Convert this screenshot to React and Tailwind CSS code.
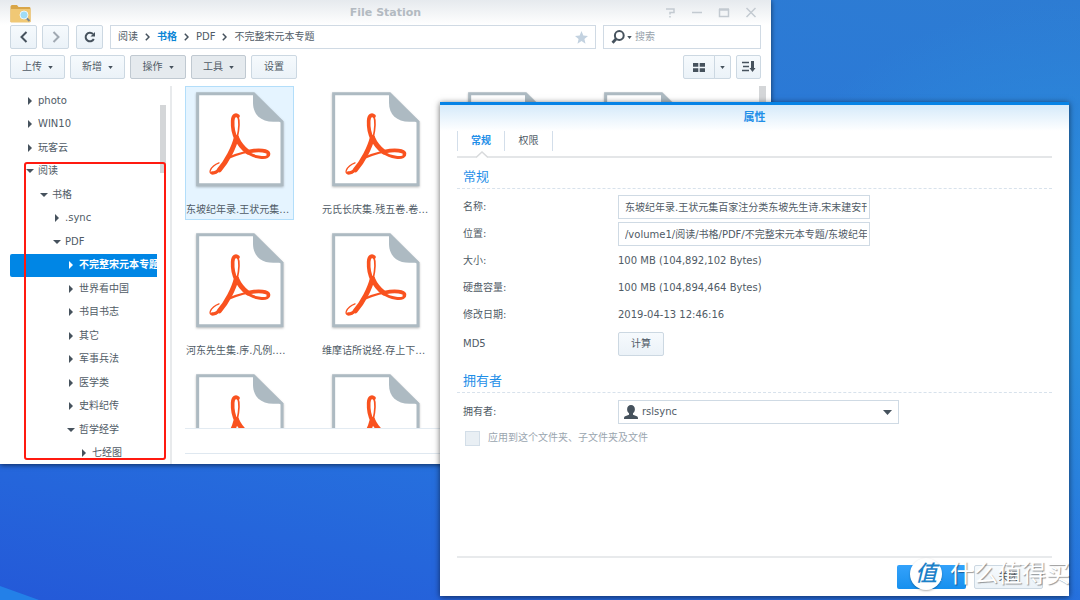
import React, { useState } from 'react';

const TREE = [
  { name: 'photo', level: 0 },
  { name: 'WIN10', level: 0 },
  { name: '玩客云', level: 0 },
  { name: '阅读', level: 0, open: true },
  { name: '书格', level: 1, open: true },
  { name: '.sync', level: 2 },
  { name: 'PDF', level: 2, open: true },
  { name: '不完整宋元本专题', level: 3 },
  { name: '世界看中国', level: 3 },
  { name: '书目书志', level: 3 },
  { name: '其它', level: 3 },
  { name: '军事兵法', level: 3 },
  { name: '医学类', level: 3 },
  { name: '史料纪传', level: 3 },
  { name: '哲学经学', level: 3, open: true },
  { name: '七经图', level: 4 },
];

const INDENT = ['pl-4', 'pl-[30px]', 'pl-[43px]', 'pl-[57px]', 'pl-[70px]'];

const FILES = [
  '东坡纪年录.王状元集百家注分类',
  '元氏长庆集.残五卷.卷一至五',
  '温国文正公文集',
  '白氏文集',
  '河东先生集.序.凡例.目录卷',
  '维摩诘所说经.存上下卷全本',
  '文选',
  '史记',
  '河东集',
  '昌黎集',
  '汉书',
  '后汉书',
];

const BTN =
  'flex h-6 items-center justify-center rounded-[2px] border border-[#ccd8e2] bg-linear-to-b from-[#f6fafd] to-[#ebf2f8]';

const Caret = ({ className = '' }) => (
  <svg viewBox="0 0 6 4" className={`h-[3px] w-[5px] shrink-0 fill-[#46525d] ${className}`}>
    <path d="M0 0h6L3 4z" />
  </svg>
);

const TreeArrow = ({ open, selected }) => (
  <svg viewBox="0 0 8 8" className={`size-2 shrink-0 ${selected ? 'fill-white' : 'fill-[#46525d]'}`}>
    {open ? <path d="M0 2h8L4 6z" /> : <path d="M2 0l4 4-4 4z" />}
  </svg>
);

const PdfIcon = () => (
  <svg viewBox="78 38 264 284" className="h-[95px] w-[88px] drop-shadow-[0_1px_1px_rgba(0,0,0,0.25)]">
    <path d="M83 43H251L336 127V316H83z" fill="#fff" stroke="#adbac2" strokeWidth="9" />
    <path d="M249 40l92 87h-31c-38 0-61-22-61-57z" fill="#adbac2" />
    <g fill="none" stroke="#f9521f" strokeLinecap="round">
      <path d="M204 110c-6-6-15-3-16 14-1 22 3 40 11 54" strokeWidth="11" />
      <path d="M203 109c6 14 4 42-2 68" strokeWidth="5" />
      <path d="M199 174c-7 30-29 72-51 97" strokeWidth="15" />
      <path d="M150 270c-15 16-34 17-29 2 4-9 13-17 26-22" strokeWidth="4" />
      <path d="M127 280c7 2 14-3 22-11" strokeWidth="10" />
      <path d="M200 175c7 17 19 31 34 43" strokeWidth="15" />
      <path d="M232 218c20 17 60 21 64 8" strokeWidth="9" />
      <path d="M178 234c25-11 50-19 80-20" strokeWidth="7" />
      <path d="M236 216c28-6 63-4 59 8" strokeWidth="11" />
    </g>
  </svg>
);

const UserIcon = () => (
  <svg viewBox="0 0 14 14" className="size-3.5 shrink-0 fill-[#46525d]">
    <path d="M7 0c2.400 0 3.900 1.700 3.900 4.200 0 1.800-.8 3.200-1.900 4.100v1.500l3.800 1.500c.8.300 1.200 1 1.200 2.700H0c0-1.700.4-2.400 1.200-2.700L5 9.800V8.300C3.900 7.400 3.100 6 3.100 4.200 3.100 1.700 4.600 0 7 0z" />
  </svg>
);

const FolderIcon = () => (
  <svg viewBox="0 0 20 18" className="h-[18px] w-[21px]">
    <path d="M0 2c0-1 .5-2 1.500-2h5L8 2h10.500c1 0 1.500.5 1.500 1.500V17H0z" fill="#d9a648" />
    <path d="M0 4h20v12.500c0 .5-.5 1-1 1H1c-.6 0-1-.5-1-1z" fill="#f0c875" />
    <path d="M16 13l3 3" stroke="#7b8790" strokeWidth="2" />
    <circle cx="13.500" cy="10" r="4" fill="#9fdcf7" stroke="#e9f5fb" strokeWidth="1" />
  </svg>
);

const Chevron = () => (
  <svg viewBox="0 0 5 8" className="h-2 w-[5px] shrink-0" fill="none" stroke="#46525d" strokeWidth="1.500">
    <path d="M.8.800L4 4 .8 7.200" />
  </svg>
);

const WindowButton = ({ label, children }) => (
  <button aria-label={label} className="flex size-3 items-center justify-center">
    <svg viewBox="0 0 12 12" className="size-3" fill="none" stroke="#c3cad1" strokeWidth="1.500">
      {children}
    </svg>
  </button>
);

const FileStation = ({ selected, setSelected }) => (
  <section className="absolute top-0 right-[309px] bottom-[136px] left-0 flex flex-col bg-white shadow-[0_1px_5px_rgba(0,0,0,0.6)]">
    <header className="flex h-[25px] shrink-0 items-center bg-linear-to-b from-[#e6eaee] to-white pr-3.5 pl-2.5">
      <div className="flex-1 pt-0.5">
        <FolderIcon />
      </div>
      <h1 className="pl-1 text-[11px] font-bold text-[#b3bac1]">File Station</h1>
      <div className="flex flex-1 justify-end gap-[15px]">
        <WindowButton label="帮助">
          <path d="M2 2h8v3.500H6v2M6 9v1.500" />
        </WindowButton>
        <WindowButton label="最小化">
          <path d="M1 5.500h10" />
        </WindowButton>
        <WindowButton label="最大化">
          <path d="M1.500 2v7.500h9V2" />
          <path d="M1 2.500h10" strokeWidth="2.500" />
        </WindowButton>
        <WindowButton label="关闭窗口">
          <path d="M1.500 1l9 9M10.500 1l-9 9" />
        </WindowButton>
      </div>
    </header>

    <div className="flex shrink-0 px-2.5">
      <button aria-label="后退" className={`${BTN} w-[27px]`}>
        <svg viewBox="0 0 10 12" className="h-3 w-2.5" fill="none" stroke="#46525d" strokeWidth="2">
          <path d="M7.500 1L2.500 6l5 5" />
        </svg>
      </button>
      <button aria-label="前进" className={`${BTN} ml-[5px] w-[27px]`}>
        <svg viewBox="0 0 10 12" className="h-3 w-2.5" fill="none" stroke="#a0a9b2" strokeWidth="2">
          <path d="M2.500 1l5 5-5 5" />
        </svg>
      </button>
      <button aria-label="刷新" className={`${BTN} ml-[7px] w-[27px]`}>
        <svg viewBox="0 0 12 12" className="size-3" fill="none" stroke="#46525d" strokeWidth="2">
          <path d="M9.800 8A4.300 4.300 0 1 1 9 3" />
          <path d="M11 1v4.500H6.500z" fill="#46525d" stroke="none" />
        </svg>
      </button>

      <nav className="ml-[7px] flex h-6 flex-1 items-center gap-[7px] border border-[#d0dae4] px-[7px]">
        <a href="#read">阅读</a>
        <Chevron />
        <a href="#shuge" className="font-bold text-[#0b86d6]">书格</a>
        <Chevron />
        <a href="#pdf">PDF</a>
        <Chevron />
        <a href="#current">不完整宋元本专题</a>
        <svg viewBox="0 0 12 12" className="ml-auto size-[13px] fill-[#c3d2e0]">
          <path d="M6 0l1.700 4.200 4.300.3-3.300 2.800 1 4.400L6 9.300l-3.700 2.400 1-4.400L0 4.500l4.300-.3z" />
        </svg>
      </nav>

      <label className="ml-[7px] flex h-6 w-[158px] items-center border border-[#d0dae4] pl-[7px]">
        <svg viewBox="0 0 14 14" className="size-3.5" fill="none" stroke="#46525d">
          <circle cx="8.300" cy="5.500" r="4.400" strokeWidth="2" />
          <path d="M5 9l-3.500 3.800" strokeWidth="2.800" />
        </svg>
        <Caret className="mr-[3px] ml-0.5" />
        <input aria-label="搜索" placeholder="搜索" className="min-w-0 flex-1 outline-none placeholder:text-[#98a2ac]" />
      </label>
    </div>

    <div className="mt-1.5 flex shrink-0 gap-[5px] px-2.5">
      <button className={`${BTN} w-[55px] gap-1.5`}>上传 <Caret /></button>
      <button className={`${BTN} w-[55px] gap-1.5`}>新增 <Caret /></button>
      <button className="flex h-6 w-14 items-center justify-center gap-1.5 rounded-[2px] border border-[#c0c9d1] bg-[#e5eaee]">
        操作 <Caret />
      </button>
      <button className="flex h-6 w-[55px] items-center justify-center gap-1.5 rounded-[2px] border border-[#c0c9d1] bg-[#e5eaee]">
        工具 <Caret />
      </button>
      <button className={`${BTN} w-[46px]`}>设置</button>

      <div className="ml-auto flex">
        <button aria-label="图标视图" className={`${BTN} w-8 rounded-r-none`}>
          <svg viewBox="0 0 12 9" className="h-[9px] w-3 fill-[#46525d]">
            <path d="M0 0h5.300v3.800H0zM6.700 0H12v3.800H6.700zM0 5.200h5.300V9H0zM6.700 5.200H12V9H6.700z" />
          </svg>
        </button>
        <button aria-label="更多视图" className={`${BTN} -ml-px w-[17px] rounded-l-none`}>
          <Caret />
        </button>
      </div>
      <button aria-label="排序" className={`${BTN} w-[25px]`}>
        <svg viewBox="0 0 14 12" className="h-3 w-3.5" fill="none" stroke="#46525d" strokeWidth="1.500">
          <path d="M0 1.500h7M1 5.500h6M0 9.500h7" />
          <path d="M10.500 0v8" strokeWidth="3" />
          <path d="M7.500 7h6l-3 4z" fill="#46525d" stroke="none" />
        </svg>
      </button>
    </div>

    <div className="mt-[7px] flex min-h-0 flex-1">
      <aside className="flex w-[172px] shrink-0 overflow-hidden border-r-2 border-[#e8eaec] pt-[3px] pl-2.5">
        <ul className="grid h-[376px] w-[147px] auto-rows-fr overflow-hidden">
          {TREE.map((node) => {
            const active = selected === node.name;
            return (
              <li key={node.name} className="min-w-0">
                <button
                  onClick={() => setSelected(node.name)}
                  className={`flex size-full items-center gap-1 overflow-hidden whitespace-nowrap ${INDENT[node.level]} ${
                    active ? 'rounded-l-[2px] bg-[#0086e5] font-bold text-white' : ''
                  }`}
                >
                  <TreeArrow open={node.open} selected={active} />
                  <span>{node.name}</span>
                </button>
              </li>
            );
          })}
        </ul>
        <div className="mt-4 ml-[3px] h-[68px] w-[6px] bg-[#d4d6d8]" />
      </aside>

      <div className="ml-[13px] flex min-w-0 flex-1 flex-col pb-2.5">
        <div className="flex min-h-0 flex-1 justify-between overflow-hidden border-b border-[#e3ebf2]">
          <ul className="grid shrink-0 auto-rows-[134px] grid-cols-[repeat(4,109px)] gap-x-[27px] gap-y-[7px]">
            {FILES.map((name, i) => (
              <li
                key={name}
                className={`flex flex-col items-center border pt-[5px] ${
                  i === 0 ? 'border-[#b3defa] bg-[#e5f4ff]' : 'border-transparent'
                }`}
              >
                <PdfIcon />
                <span className="mt-[15px] w-full truncate leading-4">{name}</span>
              </li>
            ))}
          </ul>
          <div className="mr-[5px] h-40 w-[7px] bg-[#d4d6d8]" />
        </div>
        <div className="h-[25px] border-b border-[#dfe8f0]" />
      </div>
    </div>

    {/* highlighted folder tree */}
    <div className="pointer-events-none absolute top-[162px] left-[24px] h-[298px] w-[142px] rounded-[3px] border-2 border-[#ff1a10]" />
  </section>
);

const SectionTitle = ({ children }) => (
  <h3 className="border-b border-dashed border-[#d8e2ec] pb-0.5 pl-1.5 text-[13px] leading-[18px] text-[#1f8fe8]">
    {children}
  </h3>
);

const PropertiesDialog = () => {
  const [tab, setTab] = useState('常规');

  return (
    <section className="absolute top-[102px] right-[11px] bottom-1 left-[440px] flex flex-col border-t-3 border-[#0683e6] bg-white shadow-[0_1px_6px_rgba(0,0,0,0.6)]">
      <h2 className="flex h-[26px] shrink-0 items-center justify-center bg-linear-to-b from-[#d5eafa] to-white text-[11px] font-bold text-[#1f8fe8]">
        属性
      </h2>

      <div className="mx-[17px] flex shrink-0 border-b-2 border-[#e4e6e8] pb-[5px]">
        {['常规', '权限'].map((name) => (
          <button
            key={name}
            onClick={() => setTab(name)}
            className={`relative h-5 w-12 border-r border-[#d3deea] first:border-l ${
              tab === name ? 'font-bold text-[#1f8fe8]' : ''
            }`}
          >
            {name}
            {tab === name && (
              <svg viewBox="0 0 12 7" className="absolute top-5 left-[18px] h-[7px] w-3">
                <path d="M0 6l6-5 6 5v1H0z" fill="#fff" />
                <path d="M0 6.500L6 1l6 5.500" fill="none" stroke="#d8dadc" strokeWidth="1.500" />
              </svg>
            )}
          </button>
        ))}
      </div>

      <div className="mx-[17px] mt-2.5 flex-1">
        <SectionTitle>常规</SectionTitle>
        <div className="mt-1 grid grid-cols-[155px_1fr] auto-rows-[27px] items-center pl-1.5">
          <label htmlFor="name">名称:</label>
          <input
            id="name"
            readOnly
            defaultValue="东坡纪年录.王状元集百家注分类东坡先生诗.宋末建安刊本"
            className="h-6 w-[252px] border border-[#cfdae4] pr-0.5 pl-[6px] outline-none"
          />
          <label htmlFor="path">位置:</label>
          <input
            id="path"
            readOnly
            defaultValue="/volume1/阅读/书格/PDF/不完整宋元本专题/东坡纪年录"
            className="h-6 w-[252px] border border-[#cfdae4] pr-0.5 pl-[6px] outline-none"
          />
          <span>大小:</span>
          <span>100 MB (104,892,102 Bytes)</span>
          <span>硬盘容量:</span>
          <span>100 MB (104,894,464 Bytes)</span>
          <span>修改日期:</span>
          <span>2019-04-13 12:46:16</span>
        </div>
        <div className="mt-1 grid h-6 grid-cols-[155px_1fr] items-center pl-1.5">
          <span>MD5</span>
          <button className={`${BTN} w-[46px]`}>计算</button>
        </div>

        <div className="mt-4">
          <SectionTitle>拥有者</SectionTitle>
        </div>
        <div className="mt-[7px] grid h-6 grid-cols-[155px_1fr] items-center pl-1.5">
          <label htmlFor="owner">拥有者:</label>
          <div className="flex h-6 w-[281px] items-center border border-[#cfdae4] pr-1.5 pl-[5px]">
            <UserIcon />
            <select id="owner" className="ml-1 h-full flex-1 appearance-none outline-none">
              <option>rslsync</option>
            </select>
            <svg viewBox="0 0 9 5" className="h-[5px] w-[9px] fill-[#46525d]">
              <path d="M0 0h9L4.500 5z" />
            </svg>
          </div>
        </div>
        <label className="mt-1.5 flex items-center gap-2 pl-2 text-[#9aa5af]">
          <input type="checkbox" disabled className="size-[15px] appearance-none border border-[#d3dee8] bg-[#e9eff4]" />
          应用到这个文件夹、子文件夹及文件
        </label>
      </div>

      <footer className="mx-[17px] flex shrink-0 justify-end gap-2 border-t-2 border-[#e8eaec] pt-[7px] pr-[9px] pb-[7px]">
        <button className="h-6 w-[69px] rounded-[2px] bg-linear-to-b from-[#33a2fb] to-[#1690ee] text-white">
          确定
        </button>
        <button className={`${BTN} w-[69px]`}>关闭</button>
      </footer>
    </section>
  );
};

const Watermark = () => (
  <div className="pointer-events-none absolute right-[10px] bottom-2.5 flex items-center gap-2 whitespace-nowrap">
    <span className="flex size-8 items-center justify-center rounded-full bg-white text-[22px] leading-none font-medium text-[#1c81c8] italic shadow-[0_1px_2px_rgba(0,0,0,0.3)]">
      值
    </span>
    <span className="text-[24px] leading-8 text-white [text-shadow:1px_1px_1px_rgba(0,0,0,0.4)]">
      什么值得买
    </span>
  </div>
);

const App = () => {
  const [selected, setSelected] = useState('不完整宋元本专题');

  return (
    <main className="relative h-screen overflow-hidden bg-[radial-gradient(ellipse_32%_50%_at_100%_50%,#2c95df,transparent),linear-gradient(12deg,#2459d8,#2672de_30%,#2d7cd3)] font-['DejaVu_Sans','Noto_Sans_CJK_SC',sans-serif] text-[10px] leading-4 text-[#505b66]">
      <svg viewBox="0 0 39 14" className="absolute bottom-0 left-0 h-3.5 w-[39px]">
        <path d="M0 0l39 14H0z" fill="#2380e8" />
      </svg>
      <FileStation selected={selected} setSelected={setSelected} />
      <PropertiesDialog />
      <Watermark />
    </main>
  );
};

export default App;
